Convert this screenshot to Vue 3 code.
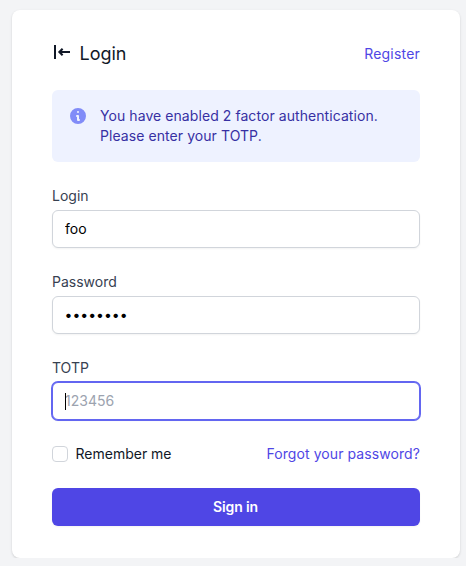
<script setup>
import { ref, onMounted } from 'vue'

const login = ref('foo')
const password = ref('password')
const totp = ref('')
const remember = ref(false)
const totpInput = ref(null)

onMounted(() => totpInput.value.focus())
</script>

<template>
  <main class="card">
    <header class="header">
      <h1 class="title">
        <svg class="title-icon" viewBox="0 0 20 20" fill="none" stroke="currentColor">
          <path d="M3 3V17" stroke-width="2" />
          <path d="M18 10H7.6M10.6 6.8L7.4 10L10.6 13.2" stroke-width="2.1" />
        </svg>
        <span>Login</span>
      </h1>
      <a class="link register">Register</a>
    </header>

    <div class="alert">
      <svg class="alert-icon" viewBox="0 0 20 20" fill="currentColor">
        <path fill-rule="evenodd" clip-rule="evenodd" d="M18 10a8 8 0 11-16 0 8 8 0 0116 0zm-7-4a1 1 0 11-2 0 1 1 0 012 0zM9 9a1 1 0 000 2v3a1 1 0 001 1h1a1 1 0 100-2v-3a1 1 0 00-1-1H9z" />
      </svg>
      <p class="alert-text">You have enabled 2 factor authentication. Please enter your TOTP.</p>
    </div>

    <form class="form" @submit.prevent>
      <label class="field">
        <span class="label">Login</span>
        <input v-model="login" class="input" type="text" />
      </label>
      <label class="field">
        <span class="label">Password</span>
        <input v-model="password" class="input password" type="password" />
      </label>
      <label class="field">
        <span class="label">TOTP</span>
        <span class="focus-wrap">
          <input ref="totpInput" v-model="totp" class="input focused" type="text" placeholder="123456" />
          <span class="caret"></span>
        </span>
      </label>
      <div class="options">
        <label class="remember">
          <input v-model="remember" class="checkbox" type="checkbox" />
          <span>Remember me</span>
        </label>
        <a class="link forgot">Forgot your password?</a>
      </div>
      <button class="submit" type="submit">Sign in</button>
    </form>
  </main>
</template>

<style>
body {
  background: #f3f4f6;
}
</style>

<style scoped>
.card {
  box-sizing: border-box;
  width: 448px;
  margin: 10px 0 0 12px;
  padding: 32px 40px;
  border-radius: 8px;
  background: #fff;
  box-shadow: 0 1px 3px rgba(0, 0, 0, 0.1), 0 1px 2px rgba(0, 0, 0, 0.06);
  color: #111827;
  font: 14px/20px Inter, "Liberation Sans", sans-serif;
}
.header {
  display: flex;
  align-items: center;
  justify-content: space-between;
  height: 24px;
}
.title {
  display: flex;
  gap: 7.5px;
  margin: 0;
  font-size: 18px;
  font-weight: 400;
  line-height: 24px;
}
.title-icon {
  width: 20px;
  height: 20px;
}
.link {
  color: #4f46e5;
}
.register {
  letter-spacing: 0.2px;
}
.forgot {
  letter-spacing: 0.08px;
}
.alert {
  display: flex;
  gap: 12px;
  margin-top: 24px;
  padding: 16px;
  border-radius: 6px;
  background: #eef2ff;
}
.alert-icon {
  flex: none;
  width: 20px;
  height: 20px;
  color: #818cf8;
}
.alert-text {
  width: 290px;
  margin: 0;
  color: #3730a3;
  letter-spacing: 0.07px;
}
.form {
  display: flex;
  flex-direction: column;
  gap: 24px;
  margin-top: 24px;
}
.field {
  display: flex;
  flex-direction: column;
  gap: 4px;
}
.label {
  color: #374151;
}
.input {
  display: block;
  box-sizing: border-box;
  width: 100%;
  height: 38px;
  padding: 7px 12px 9px;
  border: 1px solid #d1d5db;
  border-radius: 6px;
  outline: none;
  background: #fff;
  box-shadow: 0 1px 2px rgba(0, 0, 0, 0.05);
  color: #000;
  font: inherit;
}
.password {
  padding: 7px 11.5px 9px;
}
.input::placeholder {
  color: #9ca3af;
  opacity: 1;
}
.focus-wrap {
  position: relative;
}
.focused {
  border-color: #6366f1;
  box-shadow: 0 0 0 1px #6366f1, 0 1px 2px rgba(0, 0, 0, 0.05);
  caret-color: transparent;
}
.caret {
  position: absolute;
  top: 11px;
  left: 13px;
  width: 1px;
  height: 17px;
  background: #000;
}
.options {
  display: flex;
  align-items: center;
  justify-content: space-between;
}
.remember {
  display: flex;
  align-items: center;
  gap: 7.5px;
}
.checkbox {
  box-sizing: border-box;
  width: 16px;
  height: 16px;
  margin: 0;
  appearance: none;
  border: 1px solid #d1d5db;
  border-radius: 4px;
  background: #fff;
}
.submit {
  height: 38px;
  padding: 0 1px 0 0;
  border: 0;
  border-radius: 6px;
  background: #4f46e5;
  box-shadow: 0 1px 2px rgba(0, 0, 0, 0.05);
  color: #fff;
  font: inherit;
  font-weight: 600;
  letter-spacing: -0.15px;
}
</style>
